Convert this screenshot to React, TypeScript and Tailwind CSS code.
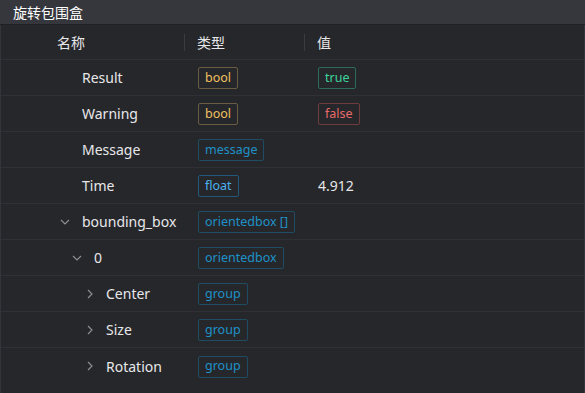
import React from "react";

type Tone = "yellow" | "green" | "red" | "blue" | "lightblue";

const toneCls: Record<Tone, string> = {
  yellow: "border-[#6a5c43] text-[#f0c060]",
  green: "border-[#2c6b58] text-[#3ed39c]",
  red: "border-[#6e3c3c] text-[#e86a6a]",
  blue: "border-[#1f4c63] text-[#1e92c8]",
  lightblue: "border-[#24587a] text-[#4bb0ec]",
};

function Badge({ text, tone }: { text: string; tone: Tone }) {
  return (
    <span
      className={`inline-flex h-[22px] items-center rounded-[2px] border px-[6px] text-[12.5px] leading-none ${toneCls[tone]}`}
    >
      {text}
    </span>
  );
}

function Chevron({ open }: { open: boolean }) {
  return (
    <svg width="12" height="12" viewBox="0 0 12 12" className="text-[#8d8e93]">
      {open ? (
        <path d="M2 4 L6 8 L10 4" fill="none" stroke="currentColor" strokeWidth="1.2" />
      ) : (
        <path d="M4 2 L8 6 L4 10" fill="none" stroke="currentColor" strokeWidth="1.2" />
      )}
    </svg>
  );
}

type Row = {
  name: string;
  level: number;
  chevron?: "open" | "closed";
  type: { text: string; tone: Tone };
  value?: React.ReactNode;
};

const rows: Row[] = [
  { name: "Result", level: 0, type: { text: "bool", tone: "yellow" }, value: <Badge text="true" tone="green" /> },
  { name: "Warning", level: 0, type: { text: "bool", tone: "yellow" }, value: <Badge text="false" tone="red" /> },
  { name: "Message", level: 0, type: { text: "message", tone: "blue" } },
  { name: "Time", level: 0, type: { text: "float", tone: "lightblue" }, value: <span className="text-[14px] text-[#e6e6e8]">4.912</span> },
  { name: "bounding_box", level: 0, chevron: "open", type: { text: "orientedbox []", tone: "blue" } },
  { name: "0", level: 1, chevron: "open", type: { text: "orientedbox", tone: "blue" } },
  { name: "Center", level: 2, chevron: "closed", type: { text: "group", tone: "blue" } },
  { name: "Size", level: 2, chevron: "closed", type: { text: "group", tone: "blue" } },
  { name: "Rotation", level: 2, chevron: "closed", type: { text: "group", tone: "blue" } },
];

const indent = ["pl-[81px]", "pl-[93px]", "pl-[105px]"];
const chevLeft = ["left-[58px]", "left-[70px]", "left-[83px]"];

export default function App() {
  return (
    <div
      className="flex h-[393px] w-[585px] flex-col overflow-hidden bg-[#26272b] text-[#e8e8ea]"
      style={{ fontFamily: '"Noto Sans", "Noto Sans CJK SC", sans-serif' }}
    >
      <div className="flex h-[24px] shrink-0 items-center bg-[#36373d] pl-[13px] text-[14px] text-white">
        旋转包围盒
      </div>
      <div className="h-[1px] shrink-0 bg-[#1f2024]" />
      <div className="flex flex-1 flex-col border-x border-[#34353a]">
        <div className="flex h-[35px] shrink-0 items-center border-b border-[#303136] text-[14px]">
          <div className="w-[183px] pl-[56px]">名称</div>
          <div className="h-[17px] w-[1px] bg-[#3a3b40]" />
          <div className="w-[119px] pl-[12px]">类型</div>
          <div className="h-[17px] w-[1px] bg-[#3a3b40]" />
          <div className="pl-[12px]">值</div>
        </div>
        {rows.map((r, i) => (
          <div
            key={i}
            className={`flex h-[36px] shrink-0 items-center text-[14px] ${i < rows.length - 1 ? "border-b border-[#303136]" : ""}`}
          >
            <div className={`relative w-[197px] ${indent[r.level]}`}>
              {r.chevron && (
                <span className={`absolute top-1/2 flex -translate-y-1/2 ${chevLeft[r.level]}`}>
                  <Chevron open={r.chevron === "open"} />
                </span>
              )}
              {r.name}
            </div>
            <div className="w-[120px]">
              <Badge text={r.type.text} tone={r.type.tone} />
            </div>
            <div>{r.value}</div>
          </div>
        ))}
      </div>
    </div>
  );
}
